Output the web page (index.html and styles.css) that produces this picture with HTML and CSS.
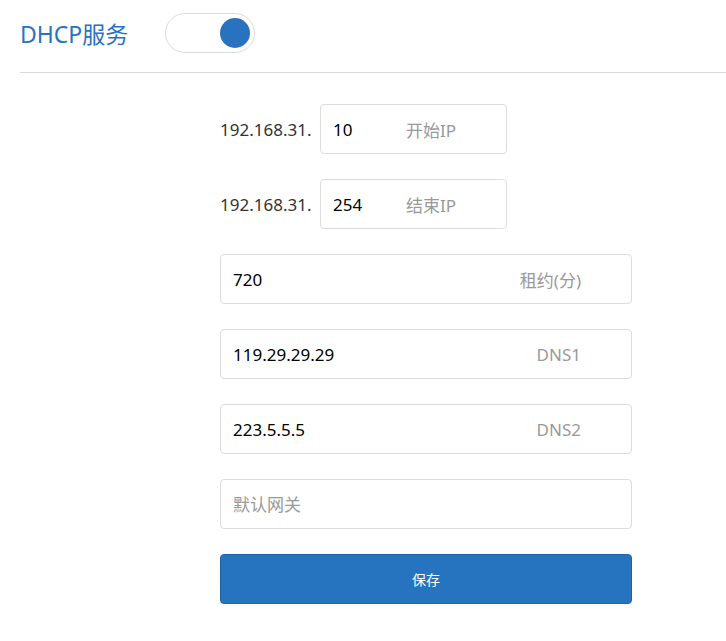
FILE: index.html
```html
<!DOCTYPE html>
<html lang="zh-CN">
<head>
<meta charset="utf-8">
<title>DHCP服务</title>
<link rel="stylesheet" href="styles.css">
</head>
<body>
<div class="header">
  <h1 class="title">DHCP服务</h1>
  <div class="toggle on"><span class="knob"></span></div>
</div>
<form class="form">
  <div class="row">
    <span class="prefix">192.168.31.</span>
    <label class="field short"><input class="value" type="text" value="10"><span class="hint">开始IP</span></label>
  </div>
  <div class="row">
    <span class="prefix">192.168.31.</span>
    <label class="field short"><input class="value" type="text" value="254"><span class="hint">结束IP</span></label>
  </div>
  <div class="row">
    <label class="field"><input class="value" type="text" value="720"><span class="hint">租约(分)</span></label>
  </div>
  <div class="row">
    <label class="field"><input class="value" type="text" value="119.29.29.29"><span class="hint">DNS1</span></label>
  </div>
  <div class="row">
    <label class="field"><input class="value" type="text" value="223.5.5.5"><span class="hint">DNS2</span></label>
  </div>
  <div class="row">
    <label class="field"><input class="value" type="text" placeholder="默认网关"></label>
  </div>
  <div class="row">
    <button class="save" type="button">保存</button>
  </div>
</form>
</body>
</html>
```
FILE: styles.css
```css
html, body {
  margin: 0;
  padding: 0;
  background: #fff;
}
body {
  font-family: "Noto Sans", "Noto Sans CJK SC", sans-serif;
  color: #333;
}
.header {
  margin-left: 20px;
  height: 40px;
  padding: 13px 0 19px;
  display: flex;
  align-items: center;
  border-bottom: 1px solid #d9d9d9;
}
.title {
  margin: 0;
  font-size: 23px;
  font-weight: normal;
  color: #2a72bf;
  width: 145px;
}
.toggle {
  box-sizing: border-box;
  width: 90px;
  height: 40px;
  border: 1.5px solid #dcdcdc;
  border-radius: 20px;
  background: #fff;
  display: flex;
  align-items: center;
  justify-content: flex-end;
  padding: 0 4px;
}
.knob {
  width: 30px;
  height: 30px;
  border-radius: 50%;
  background: #2872bf;
}
.form {
  margin: 31px 0 0 220px;
  width: 412px;
  display: flex;
  flex-direction: column;
  gap: 25px;
}
.row {
  display: flex;
  align-items: center;
  height: 50px;
}
.prefix {
  flex: 0 0 100px;
  font-size: 17px;
  color: #333;
  white-space: nowrap;
}
.field {
  box-sizing: border-box;
  flex: 1 1 0;
  min-width: 0;
  height: 50px;
  border: 1px solid #dcdcdc;
  border-radius: 4px;
  display: flex;
  align-items: center;
  padding: 0 50px 0 12px;
}
.field.short {
  flex: 0 0 187px;
  width: 187px;
}
.value {
  flex: 1 1 0;
  width: 0;
  min-width: 0;
  border: none;
  outline: none;
  background: transparent;
  padding: 0;
  font-family: "Noto Sans", "Noto Sans CJK SC", sans-serif;
  font-size: 17px;
  color: #000;
}
.value::placeholder {
  color: #999;
}
.hint {
  font-size: 17px;
  color: #999;
  white-space: nowrap;
}
.save {
  width: 100%;
  height: 50px;
  background: #2673bf;
  border: 1px solid #1f63aa;
  border-radius: 4px;
  color: #fff;
  font-family: "Noto Sans CJK SC", sans-serif;
  font-size: 14px;
}
```
